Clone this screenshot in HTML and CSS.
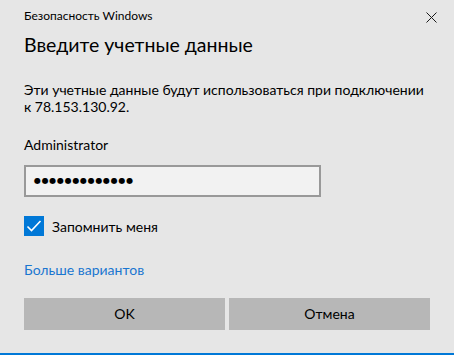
FILE: index.html
```html
<!doctype html>
<html>
  <head>
    <title>Безопасность Windows</title>
    <link rel="stylesheet" href="styles.css">
  </head>
  <body>
    <div class="dialog">
      <!--Title bar-->
      <div class="titlebar">
        <span class="app-name">Безопасность Windows</span>
        <svg class="close" width="11" height="11" viewBox="0 0 11 11">
          <path d="M0.5 0.5 L10.5 10.5 M10.5 0.5 L0.5 10.5" stroke="#1a1a1a" stroke-width="1" fill="none"/>
        </svg>
      </div>

      <h1>Введите учетные данные</h1>
      <p class="info">Эти учетные данные будут использоваться при подключении к 78.153.130.92.</p>

      <div class="user">Administrator</div>
      <div class="password">●●●●●●●●●●●●●</div>

      <label class="remember">
        <span class="check">
          <svg width="20" height="20" viewBox="0 0 20 20">
            <path d="M3.5 10.5 L7.5 14.5 L16.5 5" stroke="#fff" stroke-width="1.6" fill="none"/>
          </svg>
        </span>
        Запомнить меня
      </label>

      <a href="#" class="more">Больше вариантов</a>

      <div class="buttons">
        <a href="#" class="btn">OK</a>
        <a href="#" class="btn">Отмена</a>
      </div>
    </div>
  </body>
</html>
```

FILE: styles.css
```css
body {
  margin:0;
  background:#e6e6e6;
  font-family: Lato, Roboto, sans-serif;
  color:#000;
}

.dialog {
  height:355px;
  box-sizing:border-box;
  padding:0 24px;
  border-bottom:2px solid #0078d7;
  display:flex;
  flex-direction:column;
}

.titlebar {
  display:flex;
  justify-content:space-between;
  align-items:center;
  padding-top:8px;
  height:16px;
}
.app-name {
  font-size:12px;
  line-height:16px;
}
.close {
  margin-right:-7px;
  margin-top:3px;
}

h1 {
  margin:7px 0 0;
  font-size:19.5px;
  font-weight:400;
  line-height:28px;
}

.info {
  margin:22px 0 0;
  font-size:14px;
  line-height:17px;
}

.user {
  margin-top:20px;
  font-size:14px;
  line-height:20px;
}

.password {
  margin-top:10px;
  width:297px;
  height:32px;
  box-sizing:border-box;
  border:2px solid #999;
  background:#f2f2f2;
  padding-left:8px;
  font-family:'DejaVu Sans', sans-serif;
  font-size:8px;
  letter-spacing:0.7px;
  line-height:28px;
}

.remember {
  margin-top:19px;
  display:flex;
  align-items:center;
  font-size:14px;
  height:20px;
}
.check {
  width:20px;
  height:20px;
  background:#0078d7;
  margin-right:8px;
}
.check svg {
  display:block;
}

.more {
  margin-top:24px;
  font-size:14px;
  line-height:20px;
  color:#1a76d0;
  text-decoration:none;
  align-self:flex-start;
}

.buttons {
  margin-top:18px;
  display:flex;
  gap:4px;
}
.btn {
  flex:1;
  height:32px;
  line-height:32px;
  text-align:center;
  background:#b7b7b7;
  color:#000;
  font-size:14px;
  text-decoration:none;
}
```
